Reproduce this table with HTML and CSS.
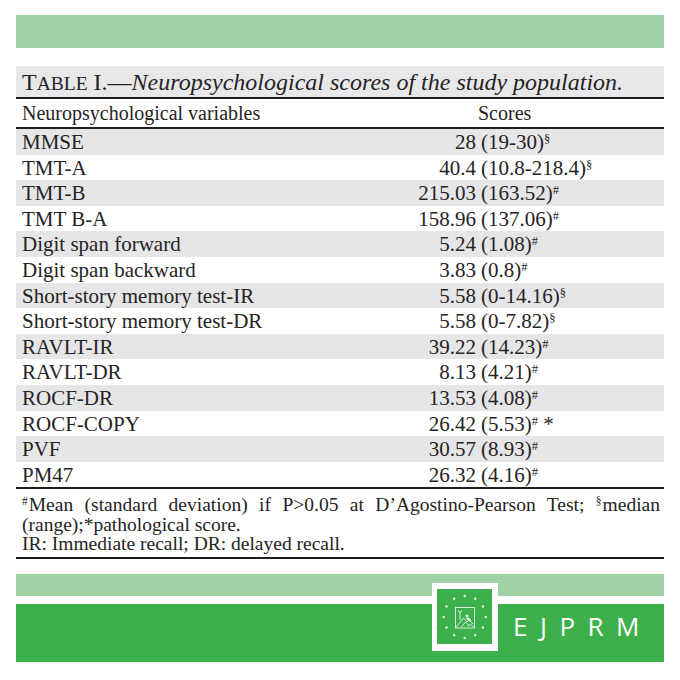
FILE: index.html
```html
<!DOCTYPE html>
<html>
<head>
<meta charset="utf-8">
<link rel="stylesheet" href="styles.css">
</head>
<body>
<div class="topbar"></div>

<div class="tbl">
  <div class="caption">T<span class="sc">ABLE</span> I.—<em>Neuropsychological scores of the study population.</em></div>
  <div class="head">
    <div class="lab">Neuropsychological variables</div>
    <div class="sh">Scores</div>
  </div>
  <div class="body">
    <div class="row alt"><div class="lab">MMSE</div><div class="num">28</div><div class="par">(19-30)<sup class="m">§</sup></div></div>
    <div class="row"><div class="lab">TMT-A</div><div class="num">40.4</div><div class="par">(10.8-218.4)<sup class="m">§</sup></div></div>
    <div class="row alt"><div class="lab">TMT-B</div><div class="num">215.03</div><div class="par">(163.52)<sup class="m">#</sup></div></div>
    <div class="row"><div class="lab">TMT B-A</div><div class="num">158.96</div><div class="par">(137.06)<sup class="m">#</sup></div></div>
    <div class="row alt"><div class="lab">Digit span forward</div><div class="num">5.24</div><div class="par">(1.08)<sup class="m">#</sup></div></div>
    <div class="row"><div class="lab">Digit span backward</div><div class="num">3.83</div><div class="par">(0.8)<sup class="m">#</sup></div></div>
    <div class="row alt"><div class="lab">Short-story memory test-IR</div><div class="num">5.58</div><div class="par">(0-14.16)<sup class="m">§</sup></div></div>
    <div class="row"><div class="lab">Short-story memory test-DR</div><div class="num">5.58</div><div class="par">(0-7.82)<sup class="m">§</sup></div></div>
    <div class="row alt"><div class="lab">RAVLT-IR</div><div class="num">39.22</div><div class="par">(14.23)<sup class="m">#</sup></div></div>
    <div class="row"><div class="lab">RAVLT-DR</div><div class="num">8.13</div><div class="par">(4.21)<sup class="m">#</sup></div></div>
    <div class="row alt"><div class="lab">ROCF-DR</div><div class="num">13.53</div><div class="par">(4.08)<sup class="m">#</sup></div></div>
    <div class="row"><div class="lab">ROCF-COPY</div><div class="num">26.42</div><div class="par">(5.53)<sup class="m">#</sup> *</div></div>
    <div class="row alt"><div class="lab">PVF</div><div class="num">30.57</div><div class="par">(8.93)<sup class="m">#</sup></div></div>
    <div class="row"><div class="lab">PM47</div><div class="num">26.32</div><div class="par">(4.16)<sup class="m">#</sup></div></div>
  </div>
  <div class="notes">
    <p class="just"><sup class="m">#</sup><span>Mean (standard deviation) if P&gt;0.05 at D’Agostino-Pearson Test;</span> <sup class="m">§</sup><span>median</span> <span>(range);*pathological score.</span></p>
    <p>IR: Immediate recall; DR: delayed recall.</p>
  </div>
</div>

<div class="footer">
  <div class="band-light"></div>
  <div class="band-dark"><span class="brand">EJPRM</span></div>
  <div class="logo">
    <svg class="emblem" viewBox="0 0 55 55" width="55" height="55">
      <rect width="55" height="55" fill="#3cb04b"/>
      <g fill="#dff2df">
        <circle cx="27.7" cy="7" r="1.2"/>
        <circle cx="38.2" cy="9.8" r="1.2"/>
        <circle cx="45.9" cy="17.5" r="1.2"/>
        <circle cx="48.7" cy="28" r="1.2"/>
        <circle cx="45.9" cy="38.5" r="1.2"/>
        <circle cx="38.2" cy="46.2" r="1.2"/>
        <circle cx="27.7" cy="49" r="1.2"/>
        <circle cx="17.2" cy="46.2" r="1.2"/>
        <circle cx="9.5" cy="38.5" r="1.2"/>
        <circle cx="6.7" cy="28" r="1.2"/>
        <circle cx="9.5" cy="17.5" r="1.2"/>
        <circle cx="17.2" cy="9.8" r="1.2"/>
      </g>
      <g fill="none" stroke="#e8f6e8" stroke-width="0.9">
        <rect x="18.5" y="18.5" width="19" height="20.5"/>
        <path d="M21 21 L23 24 L25 21 M23 24 L23 31"/>
        <path d="M19 38.5 L26.5 29 L30 33 L32 31 L36 35"/>
        <path d="M24 38.5 L28.5 33 L32 37"/>
        <path d="M31 37.5 Q33 34 36.5 37.5"/>
      </g>
      <g fill="#e8f6e8">
        <circle cx="30" cy="27" r="1.5"/>
        <path d="M28.5 29 L32 28.5 L34.5 32 L33 33 Z"/>
      </g>
    </svg>
  </div>
</div>
</body>
</html>
```

FILE: styles.css
```css
html, body {
  margin: 0;
  padding: 0;
  background: #ffffff;
}

body {
  font-family: "Liberation Serif", "Times New Roman", serif;
  color: #262324;
}

.topbar {
  margin: 15px 16px 0;
  height: 33px;
  background: #9fd2a4;
}

.tbl {
  margin: 18px 16px 0;
}

.caption {
  background: #e8e8ea;
  height: 30px;
  padding: 1px 0 0 6px;
  font-size: 24px;
  line-height: 30px;
  border-bottom: 2px solid #1e1e1e;
  white-space: nowrap;
}

.caption .sc {
  font-size: 19.5px;
}

.caption em {
  font-style: italic;
}

.head {
  display: grid;
  grid-template-columns: 462px 1fr;
  height: 28px;
  line-height: 28px;
  font-size: 20px;
  border-bottom: 2px solid #1e1e1e;
}

.lab {
  padding-left: 6px;
  white-space: nowrap;
}

.sh {
  padding-left: 0;
}

.body {
  border-bottom: 2px solid #1e1e1e;
}

.row {
  display: grid;
  grid-template-columns: 330px 130px 1fr;
  height: 25.6px;
  line-height: 25.6px;
  font-size: 21px;
}

.row > div {
  position: relative;
  top: 1px;
}

.row.alt {
  background: #e6e6e8;
}

.num {
  text-align: right;
}

.par {
  padding-left: 5px;
  white-space: nowrap;
}

.m {
  font-size: 12.5px;
  line-height: 0;
  vertical-align: 6px;
}

.notes {
  padding: 6px 4px 3px 6px;
  font-size: 19.5px;
  line-height: 19.5px;
  border-bottom: 2px solid #1e1e1e;
}

.notes p {
  margin: 0;
}

.notes .just {
  text-align: justify;
}

.notes .m {
  font-size: 11.5px;
  vertical-align: 6px;
  margin-right: 1px;
}

.footer {
  position: relative;
  margin: 15px 16px 0;
}

.band-light {
  height: 22px;
  background: #a0d2a5;
}

.band-dark {
  margin-top: 8px;
  height: 58px;
  background: #3cb04b;
  padding-left: 497px;
  box-sizing: border-box;
}

.brand {
  display: block;
  padding-top: 9px;
  font-family: "Open Sans", "Lato", sans-serif;
  font-weight: 400;
  font-size: 26px;
  line-height: 26px;
  letter-spacing: 12.5px;
  color: #ffffff;
}

.logo {
  position: absolute;
  left: 416px;
  top: 9px;
  width: 55px;
  height: 56px;
  padding: 6px 6px 6px 5px;
  background: #ffffff;
}

.emblem {
  display: block;
}
```
